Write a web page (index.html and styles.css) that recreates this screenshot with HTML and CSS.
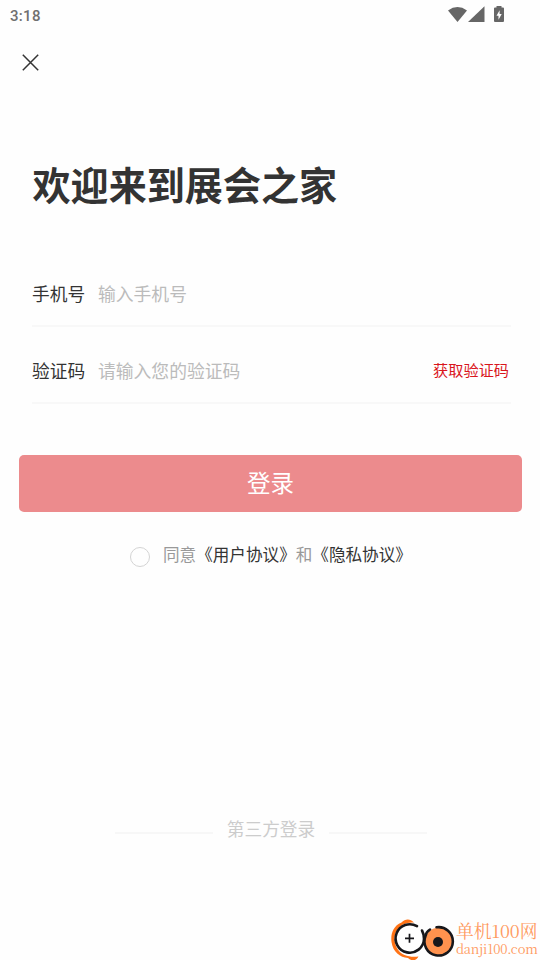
FILE: index.html
```html
<!DOCTYPE html>
<html lang="zh-CN">
<head>
<meta charset="utf-8">
<title>登录</title>
<link rel="stylesheet" href="styles.css">
</head>
<body>
<main class="screen">
  <header class="status">
    <span class="time">3:18</span>
    <svg class="status-icons" width="58" height="18" viewBox="0 0 58 18" fill="#666">
      <path d="M0 4.400Q9.500-2.400 19 4.400L9.500 16Z"/>
      <path d="M20 16H36.500V.2Z"/>
      <path fill-rule="evenodd" d="M48.500 0h5v1.600h1.500q1 0 1 1V15q0 1-1 1h-8q-1 0-1-1V2.600q0-1 1-1h1.500ZM51.600 4.200L48.500 9.700H50.500V13.700L53.700 8H51.600Z"/>
    </svg>
  </header>
  <button class="close" aria-label="关闭">
    <svg width="17" height="17" viewBox="0 0 17 17" fill="none" stroke="#333" stroke-width="1.500"><path d="M.8.8 16.200 16.200M16.200.8.8 16.200"/></svg>
  </button>
  <h1 class="title">欢迎来到展会之家</h1>
  <section class="form">
    <div class="field">
      <span class="label">手机号</span>
      <span class="placeholder">输入手机号</span>
    </div>
    <div class="field">
      <span class="label">验证码</span>
      <span class="placeholder">请输入您的验证码</span>
      <span class="get-code">获取验证码</span>
    </div>
  </section>
  <button class="login">登录</button>
  <div class="agree">
    <span class="radio"></span>
    <p class="agree-text">同意<b>《用户协议》</b>和<b>《隐私协议》</b></p>
  </div>
  <div class="third">
    <span class="rule"></span>
    <span class="third-text">第三方登录</span>
    <span class="rule"></span>
  </div>
  <footer class="brand">
    <svg class="brand-mark" width="65" height="44" viewBox="0 0 65 44" fill="none">
      <path d="M24 4.500C20 .2 15 .8 11.500 4.500C3 8 .5 16 1.500 24C3 34 10 39.500 18 40C21 43 26 43.500 28.500 38.500C20 39.500 12 38 7.500 31C2 22 4 12 13 6.500Q18 4 24 4.500Z" fill="#ff7316"/>
      <path d="M27 8.200A14.200 14.200 0 1 0 34 21Q34 16 32 12.500" fill="#fff" stroke="#17171b" stroke-width="2.600" stroke-linecap="round"/>
      <circle cx="48.500" cy="23.500" r="13.800" fill="#ff924e"/>
      <path d="M46.500 9.300A14.200 14.200 0 1 1 35.500 18Q36 14 40 11.500" stroke="#17171b" stroke-width="2.600" stroke-linecap="round"/>
      <circle cx="48" cy="24" r="5" fill="#17171b"/>
      <path d="M19.500 15.800v9M15 20.300h9" stroke="#17171b" stroke-width="1.700"/>
    </svg>
    <div class="brand-text">
      <span class="brand-name">单机100网</span>
      <span class="brand-url">danji100.com</span>
    </div>
  </footer>
</main>
</body>
</html>
```
FILE: styles.css
```css
* {
  box-sizing: border-box;
}

body {
  margin: 0;
  background: #fefefe;
  color: #333;
  font-family: "Noto Sans CJK SC", sans-serif;
}

button {
  border: 0;
  padding: 0;
  font-family: inherit;
}

.screen {
  display: flex;
  flex-direction: column;
  width: 540px;
  height: 960px;
  overflow: hidden;
}

.status {
  display: flex;
  justify-content: space-between;
  height: 32px;
  padding: 6px 34px 0 10px;
}

.time {
  font: 500 15px/20px Roboto, sans-serif;
  letter-spacing: 0.3px;
  color: #707070;
}

.close {
  display: flex;
  width: 17px;
  height: 17px;
  margin: 22px 0 0 22px;
  background: none;
}

.title {
  height: 56px;
  margin: 85px 0 0 32.5px;
  font-size: 38.1px;
  line-height: 56px;
  font-weight: 700;
}

.form {
  margin: 38px 29px 0 32px;
}

.field {
  display: flex;
  align-items: flex-start;
  height: 77px;
  padding-top: 29px;
  border-bottom: 2px solid #f8f8f8;
  font-size: 17.8px;
  line-height: 28px;
}

.label {
  width: 66px;
  font-size: 17.7px;
}

.placeholder {
  color: #bbb;
}

.get-code {
  margin: -1px 2px 0 auto;
  font-size: 15.2px;
  color: #d9161c;
}

.login {
  height: 57px;
  margin: 51px 18px 0 19px;
  padding-bottom: 2px;
  border-radius: 5px;
  background: #ec8b8d;
  color: #fff;
  font-size: 23.5px;
  line-height: 55px;
}

.agree {
  display: flex;
  height: 28px;
  margin: 28px 0 0 130px;
}

.radio {
  width: 20px;
  height: 20px;
  margin: 7px 13px 0 0;
  border: 1px solid #d4d4d4;
  border-radius: 50%;
}

.agree-text {
  margin: 0;
  color: #999;
  font-size: 16.6px;
  line-height: 28px;
}

.agree-text b {
  color: #333;
  font-weight: 400;
}

.third {
  display: flex;
  justify-content: space-between;
  height: 28px;
  margin: 246px 113px 0 115px;
}

.rule {
  width: 98px;
  height: 2px;
  margin-top: 18px;
  background: #f7f7f7;
}

.third-text {
  color: #ccc;
  font-size: 17.7px;
  line-height: 28px;
}

.brand {
  display: flex;
  height: 43px;
  margin: 74px 0 0 390px;
}

.brand-mark {
  flex: none;
  margin-top: 2px;
}

.brand-text {
  display: flex;
  flex-direction: column;
  padding-top: 5px;
  margin-left: 1px;
  color: #ff9a60;
  white-space: nowrap;
}

.brand-name {
  height: 19px;
  font: 17.8px/20px "Noto Serif CJK SC", "Noto Sans CJK SC", serif;
}

.brand-url {
  height: 18px;
  font: 13px/18px "Noto Serif CJK SC", "Liberation Serif", serif;
  letter-spacing: -0.2px;
}
```
